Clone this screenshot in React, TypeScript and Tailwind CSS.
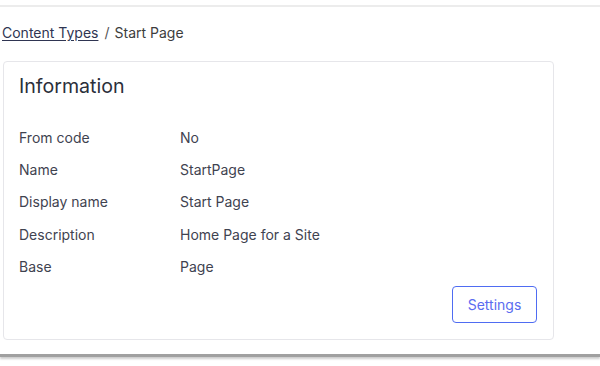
import React from "react";

const rows: [string, string][] = [
  ["From code", "No"],
  ["Name", "StartPage"],
  ["Display name", "Start Page"],
  ["Description", "Home Page for a Site"],
  ["Base", "Page"],
];

export default function App() {
  return (
    <div
      className="w-[600px] h-[366px] bg-white overflow-hidden"
      style={{ fontFamily: "Inter, 'Noto Sans', sans-serif" }}
    >
      <div className="mt-[5px] h-[352px] border-t-2 border-[#ececec] border-b-[3px] border-b-[#a0a0a0] shadow-[0_2px_2px_rgba(0,0,0,0.2)] pl-[3px] pr-[46px] flex flex-col">
        <div className="h-[54px] flex items-center text-[14px] text-[#3d3d3d] pb-[3px]">
          <span className="-ml-[1px] underline text-[#2f3552] underline-offset-2">Content Types</span>
          <span className="ml-[6px] mr-[5px] text-[#555]">/</span>
          <span>Start Page</span>
        </div>
        <div className="h-[279px] border border-[#e6e6ea] rounded-[4px] px-[15px] pt-[11px] flex flex-col">
          <div className="text-[19.6px] text-[#2b2f3a] leading-[26px]">Information</div>
          <div className="mt-[22px] flex flex-col text-[14px] text-[#3f4350]">
            {rows.map(([k, v]) => (
              <div key={k} className="flex h-[32.3px] items-center">
                <div className="w-[161px]">{k}</div>
                <div>{v}</div>
              </div>
            ))}
          </div>
          <div className="flex justify-end mt-[4px] pr-[1px]">
            <button className="w-[85px] h-[37px] border border-[#4f6cf2] rounded-[4px] text-[14px] text-[#5a6cf0] bg-white">
              Settings
            </button>
          </div>
        </div>
      </div>
    </div>
  );
}
